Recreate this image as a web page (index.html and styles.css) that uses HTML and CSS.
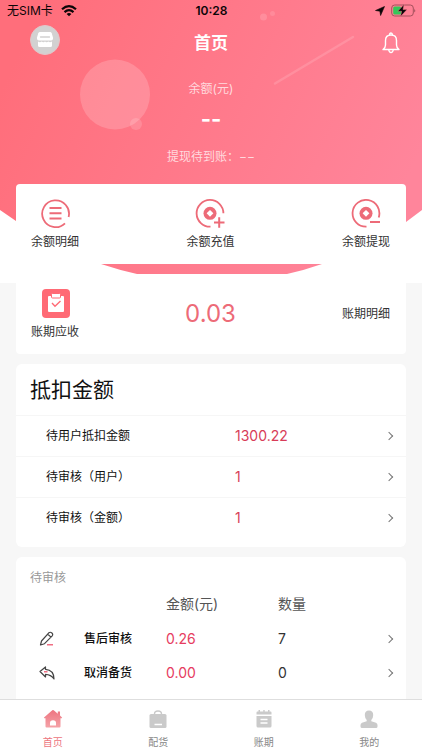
FILE: index.html
```html
<!DOCTYPE html>
<html lang="zh-CN">
<head>
<meta charset="utf-8">
<meta name="viewport" content="width=device-width, initial-scale=1">
<title>首页</title>
<link rel="stylesheet" href="styles.css">
</head>
<body>
<div class="app">
  <main class="content">
    <div class="backdrop" aria-hidden="true">
      <svg class="backdrop-art" viewBox="0 0 422 283" preserveAspectRatio="none">
        <defs>
          <linearGradient id="pink" gradientUnits="userSpaceOnUse" x1="10" y1="70" x2="380" y2="240">
            <stop offset="0" stop-color="#ff6e7b"/>
            <stop offset="1" stop-color="#ff859b"/>
          </linearGradient>
        </defs>
        <path d="M0 0H422V210L406 222Q365 250 322 264Q305 270 287 274Q250 281 211 281Q174 281 137 274Q119 270 101 264Q57 250 16 221L0 210Z" fill="url(#pink)"/>
        <circle cx="115" cy="94.500" r="35" fill="#fff" fill-opacity=".18"/>
        <circle cx="136" cy="124" r="6" fill="#fff" fill-opacity=".15"/>
        <circle cx="263.500" cy="17" r="3.500" fill="#fff" fill-opacity=".15"/>
        <circle cx="272.500" cy="13.500" r="2.500" fill="#fff" fill-opacity=".12"/>
        <path d="M275 83.500L353 37" stroke="#fff" stroke-opacity=".14" stroke-width="2.500" stroke-linecap="round"/>
      </svg>
    </div>

    <div class="status">
      <div class="status-left">
        <span>无SIM卡</span>
        <svg width="16" height="12" viewBox="0 0 16 12" fill="none" stroke="#0b0507" stroke-width="2.200">
          <path d="M1 4.300Q8-2 15 4.300M3.500 7.100Q8 3.200 12.500 7.100"/>
          <path d="M8 11.300L5.600 8.900Q8 7 10.400 8.900Z" fill="#0b0507" stroke="none"/>
        </svg>
      </div>
      <time class="status-time">10:28</time>
      <div class="status-right">
        <svg width="10" height="10" viewBox="0 0 10 10"><path d="M9.500.5L5.600 9.500L4.900 5.200L.5 4.500Z" fill="#0b0507" stroke="#0b0507" stroke-width=".6"/></svg>
        <svg width="25" height="13" viewBox="0 0 25 13">
          <rect x=".7" y="1" width="21.600" height="11" rx="3" fill="none" stroke="#a5505c"/>
          <path d="M23.300 4.500Q25 6.500 23.300 8.500Z" fill="#8e4852"/>
          <rect x="2.200" y="2.500" width="8" height="8" rx="1.500" fill="#35c759"/>
          <path d="M13 .5L6.800 7.300H10.600L9.500 12.500L16 5.500H12Z" fill="#0b0507" stroke="#ff7f91" stroke-width=".4"/>
        </svg>
      </div>
    </div>

    <header class="topbar">
      <button class="shop" aria-label="店铺">
        <svg width="18" height="18" viewBox="0 0 18 18">
          <path d="M4 1H14Q15.300 1 15.700 2.200L17 6.500Q17.300 9.500 15 9.500H3Q.7 9.500 1 6.500L2.300 2.200Q2.700 1 4 1Z" fill="#fff"/>
          <path d="M4.500 6H13.500" stroke="#d2d1d1" stroke-width="1.300" stroke-linecap="round"/>
          <path d="M2 10.500Q4 12 5.600 10.500Q7.300 12 9 10.500Q10.700 12 12.400 10.500Q14 12 16 10.500V14.500Q16 16 14.500 16H3.500Q2 16 2 14.500Z" fill="#fff"/>
        </svg>
      </button>
      <h1>首页</h1>
      <button class="bell" aria-label="消息">
        <svg width="18" height="22" viewBox="0 0 18 22" fill="none" stroke="#fff" stroke-width="1.400" stroke-linecap="round" stroke-linejoin="round">
          <path d="M1 17.500H17Q14.500 15.800 14.500 13V8.500Q14.500 3 9 3Q3.500 3 3.500 8.500V13Q3.500 15.800 1 17.500Z"/>
          <path d="M7.600 2.900Q7.600 1 9 1Q10.400 1 10.400 2.900M6.800 18Q7.200 20.500 9 20.500Q10.800 20.500 11.200 18"/>
        </svg>
      </button>
    </header>

    <section class="balance">
      <p>余额(元)</p>
      <strong>--</strong>
      <p class="pending">提现待到账：−−</p>
    </section>

    <nav class="card actions">
      <a href="#detail">
        <svg width="30" height="30" viewBox="0 0 30 30" fill="none" stroke="#ed6b78">
          <path d="M28.600 18A13.400 13.400 0 1 0 25 24.300" stroke-width="1.800"/>
          <path d="M9.500 9H21.500M9.500 14.300H21.500M9.500 19.500H21.500" stroke-width="2"/>
        </svg>
        <span>余额明细</span>
      </a>
      <a href="#recharge">
        <svg width="30" height="30" viewBox="0 0 30 30" fill="none" stroke="#ed6b78">
          <path d="M28.400 14.300A13.400 13.400 0 1 0 15.500 27.700" stroke-width="1.800"/>
          <circle cx="15" cy="14.300" r="6.500" fill="#ed6b78" stroke="none"/>
          <path d="M15 10.900L18.400 14.300L15 17.700L11.600 14.300Z" fill="#fff" stroke="none"/>
          <path d="M19 23.500H29.500M24.200 18.200V28.700" stroke-width="2"/>
        </svg>
        <span>余额充值</span>
      </a>
      <a href="#withdraw">
        <svg width="30" height="30" viewBox="0 0 30 30" fill="none" stroke="#ed6b78">
          <path d="M27.700 18.500A13.400 13.400 0 1 0 15.500 27.700" stroke-width="1.800"/>
          <circle cx="15" cy="14.300" r="6.500" fill="#ed6b78" stroke="none"/>
          <path d="M15 10.900L18.400 14.300L15 17.700L11.600 14.300Z" fill="#fff" stroke="none"/>
          <path d="M19 23H29" stroke-width="2"/>
        </svg>
        <span>余额提现</span>
      </a>
    </nav>

    <section class="card period">
      <a href="#receivable">
        <svg width="30" height="30" viewBox="0 0 30 30">
          <rect x="2" y="0" width="28" height="29" rx="4" fill="#ff6a75"/>
          <path d="M9 7H23Q24 7 24 8V22Q24 23 23 23H9Q8 23 8 22V8Q8 7 9 7Z" fill="#fff"/>
          <rect x="11.500" y="4.500" width="9" height="4.500" rx="1" fill="#fff" stroke="#ff6a75"/>
          <path d="M12 14L15 17.200L20.500 12" fill="none" stroke="#ff6a75" stroke-width="1.400"/>
        </svg>
        <span>账期应收</span>
      </a>
      <strong>0.03</strong>
      <a href="#period-detail">账期明细</a>
    </section>

    <section class="card deduct">
      <h2>抵扣金额</h2>
      <a class="line" href="#d1"><span>待用户抵扣金额</span><b>1300.22</b><i class="chevron"></i></a>
      <a class="line" href="#d2"><span>待审核（用户）</span><b>1</b><i class="chevron"></i></a>
      <a class="line" href="#d3"><span>待审核（金额）</span><b>1</b><i class="chevron"></i></a>
    </section>

    <section class="card review">
      <h3>待审核</h3>
      <table>
        <colgroup><col class="c-icon"><col class="c-name"><col class="c-sum"><col class="c-count"><col class="c-go"></colgroup>
        <thead>
          <tr><td></td><td></td><th scope="col">金额(元)</th><th scope="col">数量</th><td></td></tr>
        </thead>
        <tbody>
          <tr>
            <td><svg width="16" height="16" viewBox="0 0 16 16" fill="none" stroke="#444" stroke-width="1.200" stroke-linejoin="round"><path d="M1.500 14L2.500 10L9.800 1.800Q11.300.6 12.900 2Q14.300 3.400 13.200 4.800L5.500 12.700Z M8.800 3.200L12 6.100"/><path d="M8 13.800H14" stroke="#ec4964"/></svg></td>
            <th scope="row">售后审核</th><td class="sum">0.26</td><td class="count">7</td><td><i class="chevron"></i></td>
          </tr>
          <tr>
            <td><svg width="16" height="16" viewBox="0 0 16 16" fill="none" stroke="#444" stroke-width="1.200" stroke-linejoin="round"><path d="M1 6.500L6.500 2V4.300Q15 5 15 14Q12 9.500 6.500 9.300V12Z"/><path d="M5 6.800H8.500" stroke="#ec4964"/></svg></td>
            <th scope="row">取消备货</th><td class="sum">0.00</td><td class="count">0</td><td><i class="chevron"></i></td>
          </tr>
          <tr>
            <td><svg width="16" height="16" viewBox="0 0 16 16" fill="none" stroke="#444" stroke-width="1.200" stroke-linejoin="round"><path d="M7 1L14 5V12L7 15L1 12V5Z"/></svg></td>
            <td></td><td></td><td></td><td></td>
          </tr>
        </tbody>
      </table>
    </section>
  </main>

  <nav class="tabs">
    <a class="active" href="#home">
      <svg width="20" height="20" viewBox="0 0 20 20"><defs><linearGradient id="home" x2="0" y2="1"><stop stop-color="#ed7480"/><stop offset="1" stop-color="#f5a3a8"/></linearGradient></defs><path d="M9.300 1.300Q10 .8 10.700 1.300L14.800 4.700V2.500H17V6.600L19 8.500Q19.400 9.300 18.500 9.300H17.500V17.500Q17.500 18.500 16.500 18.500H3.500Q2.500 18.500 2.500 17.500V9.300H1.500Q.6 9.300 1 8.500Z" fill="url(#home)"/><path d="M7 16.500V14Q7 11.300 10 11.300Q13 11.300 13 14V16.500Z" fill="#fff"/></svg>
      <span>首页</span>
    </a>
    <a href="#goods">
      <svg width="20" height="20" viewBox="0 0 20 20"><path d="M6.500 6.500V5Q6.500 2 10 2Q13.500 2 13.500 5V6.500" fill="none" stroke="#cacaca" stroke-width="1.400"/><rect x="1.500" y="5" width="17" height="14" rx="1.500" fill="#cacaca"/><path d="M6.500 15.500H14" stroke="#fff" stroke-width="1.500"/></svg>
      <span>配货</span>
    </a>
    <a href="#period">
      <svg width="20" height="20" viewBox="0 0 20 20"><path d="M2.500 5.500V3.500Q2.500 2.500 3.500 2.500H4.500V1H6V2.500H9.300V1H10.700V2.500H14V1H15.500V2.500H16.500Q17.500 2.500 17.500 3.500V5.500Z M2.500 7H17.500V17Q17.500 18.500 16 18.500H4Q2.500 18.500 2.500 17Z" fill="#cacaca"/><path d="M6.500 10.500H13.500M6.500 14H13.500" stroke="#fff" stroke-width="1.400"/></svg>
      <span>账期</span>
    </a>
    <a href="#mine">
      <svg width="20" height="20" viewBox="0 0 20 20"><path d="M10 1.500Q14.200 1.500 14.200 6Q14.200 9 12.300 11V12.200L17 13.800Q18.500 14.500 18.500 16V17.500Q18.500 19 17 19H3Q1.500 19 1.500 17.500V16Q1.500 14.500 3 13.800L7.700 12.200V11Q5.800 9 5.800 6Q5.800 1.500 10 1.500Z" fill="#cacaca"/></svg>
      <span>我的</span>
    </a>
  </nav>
</div>
</body>
</html>
```
FILE: styles.css
```css
* { box-sizing: border-box; }

body {
  margin: 0;
  background: #f7f7f7;
  color: #333;
  font: 12px/16px Inter, "Noto Sans CJK SC", sans-serif;
}

h1, h2, h3, p { margin: 0; font-size: 12px; font-weight: 400; }
a { color: inherit; text-decoration: none; }
button { border: 0; padding: 0; background: none; }
svg { display: block; flex: none; }

.app { display: flex; flex-direction: column; height: 100vh; }

.content {
  position: relative;
  flex: 1;
  min-height: 0;
  overflow: hidden;
}

.backdrop {
  position: absolute;
  inset: 0 0 auto;
  z-index: -1;
  background: #fff;
}

.backdrop-art { width: 100%; height: 283px; }

.status {
  display: grid;
  grid-template-columns: 1fr auto 1fr;
  align-items: center;
  height: 21px;
  padding: 0 6px 0 7px;
  color: #0b0507;
}

.status-left, .status-right { display: flex; align-items: center; gap: 8px; }
.status-right { justify-content: flex-end; gap: 6px; }
.status-time { font-weight: 600; }

.topbar {
  display: grid;
  grid-template-columns: 30px 1fr 30px;
  align-items: center;
  height: 44px;
  padding: 0 22px 0 30px;
}

.topbar h1 {
  padding-right: 8px;
  color: #fff;
  font-size: 17px;
  line-height: 24px;
  font-weight: 600;
  text-align: center;
}

.shop {
  display: grid;
  place-items: center;
  align-self: start;
  width: 30px;
  height: 30px;
  margin-top: 4px;
  border: 1px solid #e3c5c8;
  border-radius: 50%;
  background: #d2d1d1;
}

.bell { justify-self: end; }

.balance {
  display: flex;
  flex-direction: column;
  align-items: center;
  height: 119px;
  padding-top: 16px;
  color: #ffd9de;
}

.balance strong {
  margin: 10px 0;
  color: #fff;
  font-size: 22px;
  line-height: 24px;
  font-weight: 700;
}

.pending { padding-top: 8px; }

.card {
  margin: 0 16px 10px;
  border-radius: 6px;
  background: #fff;
}

.actions, .period {
  display: flex;
  align-items: center;
  justify-content: space-between;
  height: 80px;
  padding: 0 16px 0 15px;
  border-radius: 4px;
}

.actions a, .period a {
  display: flex;
  flex-direction: column;
  align-items: center;
  gap: 5px;
}

.period { display: grid; grid-template-columns: 1fr auto 1fr; }
.period a:first-child { justify-self: start; }
.period a:last-child { justify-self: end; }

.period strong {
  color: #ed6b78;
  font-size: 24px;
  line-height: 30px;
  font-weight: 400;
}

.deduct { padding-bottom: 9px; color: #111; }

.deduct h2 {
  padding: 11px 14px;
  font-size: 21px;
  line-height: 29px;
}

.line {
  display: grid;
  grid-template-columns: 189fr 151fr 6px;
  align-items: center;
  height: 41px;
  padding: 0 14px 0 30px;
  border-top: 1px solid #f6f6f6;
}

.line b {
  color: #d83c58;
  font-size: 14px;
  font-weight: 400;
}

.chevron {
  display: block;
  width: 6px;
  height: 6px;
  border: solid #777;
  border-width: 1px 1px 0 0;
  transform: rotate(45deg);
}

.review { padding-top: 13px; }

.review h3 {
  padding: 0 14px;
  color: #999;
}

.review table {
  width: 100%;
  border-collapse: collapse;
  table-layout: fixed;
}

.c-icon { width: 68px; }
.c-name { width: 82px; }
.c-sum { width: 112px; }
.c-go { width: 20px; }

.review th, .review td {
  height: 34px;
  padding: 0;
  text-align: left;
  font-weight: 400;
}

.review thead th {
  height: 36px;
  color: #555;
  font-size: 14px;
}

.review tbody th { color: #111; font-weight: 500; }
.review td svg { margin-left: 23px; }
.review .sum { color: #e63c60; font-size: 14px; }
.review .count { font-size: 14px; }

.tabs {
  display: grid;
  grid-template-columns: repeat(4, 1fr);
  height: 51px;
  border-top: 1px solid #dedede;
  background: #fff;
  color: #888;
  font-size: 10px;
  line-height: 14px;
}

.tabs a {
  display: flex;
  flex-direction: column;
  align-items: center;
  gap: 6px;
  padding-top: 9px;
}

.tabs .active { color: #ed7480; }
```
